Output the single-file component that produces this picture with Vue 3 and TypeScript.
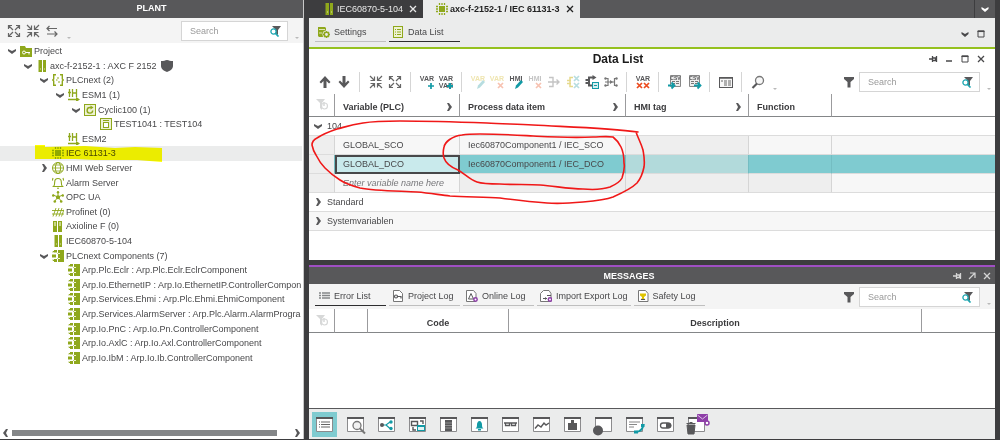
<script setup lang="ts">
import { ref } from 'vue'

interface TreeNode {
  label: string
  level: number
  icon: string
  chevron?: 'down' | 'right'
  shield?: boolean
  marked?: boolean
}

const tree: TreeNode[] = [
  { label: 'Project', level: 0, icon: 'folder', chevron: 'down' },
  { label: 'axc-f-2152-1 : AXC F 2152', level: 1, icon: 'device', chevron: 'down', shield: true },
  { label: 'PLCnext (2)', level: 2, icon: 'braces', chevron: 'down' },
  { label: 'ESM1 (1)', level: 3, icon: 'esm', chevron: 'down' },
  { label: 'Cyclic100 (1)', level: 4, icon: 'cyclic', chevron: 'down' },
  { label: 'TEST1041 : TEST104', level: 5, icon: 'program' },
  { label: 'ESM2', level: 3, icon: 'esm' },
  { label: 'IEC 61131-3', level: 2, icon: 'chip', marked: true },
  { label: 'HMI Web Server', level: 2, icon: 'globe', chevron: 'right' },
  { label: 'Alarm Server', level: 2, icon: 'bell' },
  { label: 'OPC UA', level: 2, icon: 'hub' },
  { label: 'Profinet (0)', level: 2, icon: 'profinet' },
  { label: 'Axioline F (0)', level: 2, icon: 'axio' },
  { label: 'IEC60870-5-104', level: 2, icon: 'device' },
  { label: 'PLCnext Components (7)', level: 2, icon: 'component', chevron: 'down' },
  { label: 'Arp.Plc.Eclr : Arp.Plc.Eclr.EclrComponent', level: 3, icon: 'component' },
  { label: 'Arp.Io.EthernetIP : Arp.Io.EthernetIP.ControllerCompon', level: 3, icon: 'component' },
  { label: 'Arp.Services.Ehmi : Arp.Plc.Ehmi.EhmiComponent', level: 3, icon: 'component' },
  { label: 'Arp.Services.AlarmServer : Arp.Plc.Alarm.AlarmProgra', level: 3, icon: 'component' },
  { label: 'Arp.Io.PnC : Arp.Io.Pn.ControllerComponent', level: 3, icon: 'component' },
  { label: 'Arp.Io.AxlC : Arp.Io.Axl.ControllerComponent', level: 3, icon: 'component' },
  { label: 'Arp.Io.IbM : Arp.Io.Ib.ControllerComponent', level: 3, icon: 'component' },
]

const G = '#8fa81c'
const D = '#58585a'
const T = '#129aa5'

// 12 x 12 glyphs
const small: Record<string, string> = {
  down: `<path d="M2 4l4 2 4-2v2L6 9 2 6z" fill="${D}"/>`,
  right: `<path d="M4 2l2 4-2 4h2l3-4-3-4z" fill="${D}"/>`,
  left: `<path d="M8 2L6 6l2 4H6L3 6l3-4z" fill="${D}"/>`,
  folder: `<path d="M0 1h5l1 2h6v9H0z" fill="${G}"/><circle cx="4" cy="7.500" r="1.500" fill="none" stroke="#fff"/><path d="M5.500 7.500H10M9 7.500v2" stroke="#fff" fill="none"/>`,
  device: `<path d="M2.500 0H6v12H2.500zM7 0h3v12H7z" fill="${G}"/><path d="M4 9h1M8 9h1" stroke="#d9e2a6"/>`,
  braces: `<path d="M4 .7H1.700V5L.7 6l1 1v4.300H4M8 .7h2.300V5l1 1-1 1v4.300H8" fill="none" stroke="${G}" stroke-width="1.400"/><path d="M5 4h2M4 6h1.500M6 8h2" stroke="${G}"/>`,
  esm: `<path d="M1.500 0v8M0 3.500h3M4.500 0v8M4.500 4h4M8.500 0v8M0 10.500h9" stroke="${G}" fill="none" stroke-width="1.300"/><path d="M8 8l4 2.500L8 13z" fill="${G}"/>`,
  cyclic: `<rect x=".5" y=".5" width="11" height="11" fill="#eef2d4" stroke="${G}"/><path d="M8.700 6.500A2.800 2.800 0 1 1 6 3.500h1" fill="none" stroke="${G}" stroke-width="1.400"/><path d="M6.500 1.500L9.500 3.500 6.500 5.500z" fill="${G}"/>`,
  program: `<rect x=".5" y=".5" width="11" height="11" fill="#eef2d4" stroke="${G}"/><rect x="3.500" y="4.500" width="5" height="5" fill="#fff" stroke="${G}"/><path d="M3 2.500h6" stroke="${G}"/>`,
  chip: `<rect x="3" y="3" width="6" height="6" fill="${G}"/><path d="M3.500 0v2M6 0v2M8.500 0v2M3.500 10v2M6 10v2M8.500 10v2M0 3.500h2M0 6h2M0 8.500h2M10 3.500h2M10 6h2M10 8.500h2" stroke="${G}" stroke-width="1.300"/>`,
  globe: `<g fill="none" stroke="${G}"><circle cx="6" cy="6" r="5.500"/><ellipse cx="6" cy="6" rx="2.600" ry="5.500"/><path d="M.5 6h11M1.500 3h9M1.500 9h9" stroke-width=".8"/></g>`,
  bell: `<path d="M1.500 9.500h9c-1.200-1-1.200-2-1.200-4.500S8 1.500 6 1.500 2.700 2.500 2.700 5s0 3.500-1.200 4.500zM5 11.200h2M1 1l-.7 2.500M11 1l.7 2.500" fill="none" stroke="${G}" stroke-width="1.100"/>`,
  hub: `<path d="M6 6V1M6 6L1 4M6 6l5-2M6 6l-3.500 4.500M6 6l3.500 4.500" stroke="${G}"/><g fill="${G}"><circle cx="6" cy="6.300" r="2"/><circle cx="6" cy="1.200" r="1.200"/><circle cx="1.200" cy="4.500" r="1.200"/><circle cx="10.800" cy="4.500" r="1.200"/><circle cx="2.800" cy="10.500" r="1.300"/><circle cx="9.200" cy="10.500" r="1.300"/></g>`,
  profinet: `<path d="M0 4.500h12M0 8h12M1 10.500L4 2M4 10.500L7 2M7 10.500L10 2M9.500 10.500L12 3.500" stroke="${G}" stroke-width=".9"/>`,
  axio: `<path d="M1 1h4v11H1zM6 1h4v11H6z" fill="${G}"/><path d="M3 2v4M8 2v4" stroke="#dbe3ae" stroke-width="1.500"/>`,
  component: `<path d="M6 0h6v12H6zM2 0h3v2.500H2zM0 4.500h4v3H0zM2 9h3v3H2z" fill="${G}"/><path d="M1 2.500v-1h1M5 3.500h3M5 8.500h3M1 9.500v1h1" fill="none" stroke="${G}"/><path d="M5.500 3.500H8M5.500 8.500H8" stroke="#eef2d4"/>`,
  shield: `<path d="M0 1c3 0 4-.5 6-1 2 .5 3 1 6 1v5c0 3-3 5-6 6-3-1-6-3-6-6z" fill="${D}"/>`,
  settings: `<path d="M0 1h7l1 1v9H1L0 10z" fill="${G}"/><path d="M1 3.500h6M1 7h3" stroke="#dfe7b5"/><circle cx="8.500" cy="8.500" r="4" fill="#ebecec"/><circle cx="8.500" cy="8.500" r="2.200" fill="none" stroke="${G}" stroke-width="1.500"/><path d="M8.500 5v1M8.500 11v1M5 8.500h1M11 8.500h1M6 6l.7.700M11 6l-.7.700M6 11l.7-.7M11 11l-.7-.7" stroke="${G}" stroke-width="1.300"/>`,
  list: `<rect x="1.500" y=".5" width="9" height="11" fill="#eef2d4" stroke="${G}"/><path d="M3 3.500h1M5 3.500h4M3 6h1M5 6h4M3 8.500h1M5 8.500h4" stroke="${G}"/>`,
  errors: `<path d="M1 3h2M4 3h8M1 5.500h2M4 5.500h8M1 8h2M4 8h8" stroke="#848688" stroke-width="1.300"/>`,
  project: `<path d="M1.500.5h6l3 3v8h-9z" fill="#fff" stroke="#777"/><circle cx="4" cy="6.500" r="1.500" fill="none" stroke="${D}" stroke-width="1.200"/><path d="M5.500 6.500H9v2" fill="none" stroke="${D}" stroke-width="1.200"/>`,
  online: `<path d="M.5.5h7l2.500 3v8H.5z" fill="#fff" stroke="#777"/><path d="M2.500 9L5 3.500 7.500 9z" fill="none" stroke="${D}"/><circle cx="9.500" cy="9.500" r="1.700" fill="#fff" stroke="#8e3fa8" stroke-width="1.500"/>`,
  impexp: `<path d="M.5 11.500v-8l3-3H9l2 3v8z" fill="#fff" stroke="#777"/><path d="M3 8.500h4M7 5.500h4" stroke="${D}"/><path d="M5 7l2 1.500L5 10z" fill="${D}"/><circle cx="10" cy="9.500" r="1.700" fill="#fff" stroke="#8e3fa8" stroke-width="1.500"/>`,
  safety: `<path d="M1.500.5h7l2.500 3v8H1.500z" fill="#fff" stroke="#777"/><path d="M3 3.500h6v2L7 7v1l1.500 2h-5L5 8V7L3 5.500z" fill="#e0c400"/><path d="M4 9.500h4" stroke="${D}"/>`,
  pin: `<path d="M2 6h3M5.500 3v6M6 5h2.500v2.500H6M9.500 3v6" stroke="currentColor" stroke-width="1.300" fill="none"/>`,
  min: `<path d="M3 8h6" stroke="currentColor" stroke-width="1.500"/>`,
  max: `<path d="M3 3v6h6V3z" fill="none" stroke="currentColor"/><path d="M2.500 3.300h7" stroke="currentColor" stroke-width="1.500"/>`,
  close: `<path d="M3 3l6 6M9 3L3 9" stroke="currentColor" stroke-width="1.300"/>`,
  popout: `<path d="M3 9l5.500-5.500M4 3h5v5" fill="none" stroke="currentColor" stroke-width="1.200"/>`,
  chev: `<path d="M2.500 4L6 6l3.500-2v2L6 9 2.500 6z" fill="currentColor"/>`,
  more: `<path d="M4 6h4l-2 2z" fill="#b9b9b9"/>`,
  find: `<path d="M3 1h9L9 5v5L6 8V4z" fill="${D}"/><circle cx="4.500" cy="6.500" r="2.600" fill="#fff" stroke="#1fa7b1" stroke-width="1.300"/><path d="M6.500 8.500l3 3" stroke="#1fa7b1" stroke-width="1.700"/>`,
  funnel: `<path d="M1 1h10v2L7.500 6v5.500h-3V6L1 3z" fill="${D}"/>`,
  filterReset: `<path d="M0 0h9L6 4v7L4 9V4z" fill="#d7d8d8"/><circle cx="8.500" cy="7" r="3" fill="#fff" stroke="#d7d8d8" stroke-width="1.200"/><path d="M8 3v4" stroke="#d7d8d8" stroke-width="1.500"/>`,
}

const word = (t: string, c: string, y = 7): string =>
  `<text x="8" y="${y}" text-anchor="middle" font-family="Liberation Sans, sans-serif" font-weight="bold" font-size="7" fill="${c}">${t}</text>`
const cross = (x: number, y: number, c: string): string =>
  `<path d="M${x} ${y}l5 5M${x + 5} ${y}l-5 5" stroke="${c}" stroke-width="1.700"/>`
const pencil = (c: string): string => `<path d="M7 15l1-3.500 5-5.500 2 2-5 5.500z" fill="${c}"/>`
const sheet = `<path d="M3.500 1.500h10v11h-10z" fill="#eee" stroke="#888"/>` +
  `<text x="8.500" y="6" text-anchor="middle" font-family="Liberation Sans, sans-serif" font-weight="bold" font-size="5" fill="${D}">CSV</text>` +
  `<path d="M5 7.500h3M9 7.500h3M9 9.500h3M5 9.500h3" stroke="#777"/>`

// 16 x 16 glyphs
const tool: Record<string, string> = {
  up: `<path d="M8 2l5.500 6-1.500 1.500L9.500 7v7h-3V7L4 9.500 2.500 8z" fill="${D}"/>`,
  dn: `<path d="M8 14l5.500-6L12 6.500 9.500 9V2h-3v7L4 6.500 2.500 8z" fill="${D}"/>`,
  collapse: `<path d="M2 2l4 4M14 2l-4 4M2 14l4-4M14 14l-4-4M6.500 2.500v4h-4M9.500 2.500v4h4M6.500 13.500v-4h-4M9.500 13.500v-4h4" fill="none" stroke="#666" stroke-width="1.200"/>`,
  expand: `<path d="M7 7L2.500 2.500M9 7l4.500-4.500M7 9l-4.500 4.500M9 9l4.500 4.500M2.500 6V2.500H6M10 2.500h3.500V6M2.500 10v3.500H6M10 13.500h3.500V10" fill="none" stroke="#666" stroke-width="1.200"/>`,
  swap: `<path d="M13 5.500H3M3 11h10M5.500 3L3 5.500 5.500 8M10.500 8.500L13 11l-2.500 2.500" fill="none" stroke="#666" stroke-width="1.200"/>`,
  varAdd: word('VAR', D) + `<path d="M12 9v6M9 12h6" stroke="${T}" stroke-width="1.700"/>`,
  varsAdd: word('VAR', D) + word('VAR', D, 14) + `<path d="M12 9v6M9 12h6" stroke="${T}" stroke-width="2"/>`,
  varEdit: word('VAR', '#efe5b0') + pencil('#b7dde0'),
  varDel: word('VAR', '#efe5b0') + cross(9, 9, '#f7c2b1'),
  hmiEdit: word('HMI', D) + pencil(T),
  hmiDel: word('HMI', '#c4c4c4') + cross(9, 9, '#f7c2b1'),
  merge: `<path d="M3 3.500h4v9H3M2 8h11M10.500 5.500L13 8l-2.500 2.500" fill="none" stroke="#c4c4c4" stroke-width="1.400"/>`,
  split: `<path d="M8 3.500H5v9h3M2 6.500h4M2 9.500h4" fill="none" stroke="#e6d98c" stroke-width="1.500"/>` + cross(9, 2, '#b7dde0') + cross(9, 9, '#b7dde0'),
  connect: `<path d="M9 3.500H5v8h3M1.500 6H5M1.500 9H5" fill="none" stroke="${D}" stroke-width="2"/><path d="M8.500 1l4 2.500-4 2.500z" fill="${D}"/><rect x="8.500" y="8.500" width="6" height="6" fill="#d6eff0" stroke="${T}"/><path d="M10 11.500h3" stroke="${T}"/>`,
  link: `<path d="M2 4.500h3v7H2M14 4.500h-2.500v7H14M2 8h10" fill="none" stroke="#777" stroke-width="1.200"/><path d="M7 6l3 2-3 2z" fill="#777"/><circle cx="2.500" cy="4.500" r="1.200" fill="#777"/><circle cx="2.500" cy="11.500" r="1.200" fill="#777"/><circle cx="13.500" cy="4.500" r="1.200" fill="#777"/><circle cx="13.500" cy="11.500" r="1.200" fill="#777"/>`,
  varClear: word('VAR', D) + cross(2, 9, '#ec4b1e') + cross(9, 9, '#ec4b1e'),
  csvIn: sheet + `<path d="M1 11.500h5M4.500 8.500l3 3-3 3" fill="none" stroke="${T}" stroke-width="1.800"/>`,
  csvOut: sheet + `<path d="M8 11.500h6M11.500 8.500l3 3-3 3" fill="none" stroke="${T}" stroke-width="1.800"/>`,
  table: `<rect x="1.500" y="3.500" width="13" height="10" fill="#f7f7f7" stroke="${D}"/><path d="M1 4h14" stroke="${D}" stroke-width="1.500"/><path d="M3 7h2M6 7h3M10 7h3M6 9h3M10 9h3M6 11h3M10 11h3" stroke="#666"/>`,
  lens: `<circle cx="9.500" cy="6.500" r="4" fill="#f7f7f7" stroke="#777" stroke-width="1.300"/><path d="M7 9.500l-4.500 4.500" stroke="${D}" stroke-width="2.200"/>`,
}

const frame = `<path d="M4.500 6h16v13.500h-16z" fill="#fff" stroke="#8b8b8d"/><path d="M4 6h17" stroke="${D}" stroke-width="2"/>`
// 25 x 25 glyphs of the view bar
const views: { name: string; art: string }[] = [
  { name: 'Messages', art: `<path d="M7 10h1M9 10h9M7 12.500h1M9 12.500h9M7 15h1M9 15h9" stroke="#666" stroke-width="1.200"/>` },
  { name: 'Find', art: `<circle cx="14" cy="13.500" r="4" fill="#f1f1f1" stroke="#777" stroke-width="1.300"/><path d="M17 16.500l5 5" stroke="#777" stroke-width="2"/>` },
  { name: 'Cross references', art: `<path d="M8 13h4l4-3M12 13l4 3.500" stroke="${T}" fill="none" stroke-width="1.200"/><circle cx="8" cy="13" r="2" fill="${D}"/><circle cx="17" cy="10" r="1.700" fill="${T}"/><circle cx="17" cy="16.500" r="1.700" fill="${T}"/>` },
  { name: 'Call tree', art: `<path d="M6.500 9.500h6v4h-6zM8 15v3h3M15 9h3v3" fill="none" stroke="${D}" stroke-width="1.400"/><rect x="12.500" y="13.500" width="7" height="5" fill="#e2f4f5" stroke="${T}"/><path d="M12 14h8" stroke="${T}" stroke-width="2"/>` },
  { name: 'Stack', art: `<path d="M9 8h7v11H9z" fill="${D}"/><path d="M9 11h7M9 13.500h7M9 16h7" stroke="#aaa" stroke-width=".7"/>` },
  { name: 'Alarms', art: `<path d="M8.500 16.500c1.500-1 1.500-2.500 1.500-4s1-3.500 2.500-3.500 2.500 2 2.500 3.500 0 3 1.500 4zM11 17h3v1.500h-3z" fill="${T}"/>` },
  { name: 'Watch', art: `<path d="M6 11h13M7.500 11v2.500h4V11M13.500 11v2.500h4V11" fill="none" stroke="${D}" stroke-width="1.300"/>` },
  { name: 'Logic analyzer', art: `<path d="M6 16.500l3-3.500 3 2 3-4 2 2 3-2" fill="none" stroke="${D}" stroke-width="1.400"/>` },
  { name: 'Breakpoints', art: `<path d="M11 8h3v3h3v7H8v-7h3z" fill="${D}"/>` },
  { name: 'Recording', art: `<circle cx="7" cy="18.500" r="5" fill="${D}"/>` },
  { name: 'Online calls', art: `<path d="M7 10h11M7 12.500h8M7 15h5" stroke="#888" stroke-width="1.200"/><path d="M13 20c5 0 8-3 8.500-8" stroke="${T}" stroke-width="2" fill="none"/><path d="M12 18.500h4v3h-4zM19 12h3.500v3H19z" fill="${T}"/>` },
  { name: 'Forcing', art: `<rect x="7.500" y="11" width="10" height="5" rx="2.500" fill="#fff" stroke="${D}" stroke-width="1.300"/><path d="M13 11h3a2.500 2.500 0 0 1 0 5h-3z" fill="${D}"/>` },
  { name: 'Recycle bin', art: `<path d="M3 13h8l-1 9H4zM2.500 11.500h9M5.500 10.500h3" fill="${D}" stroke="${D}"/><path d="M13 2h11v8H13z" fill="#8e3fa8"/><path d="M13.500 3l5 4 5-4" fill="none" stroke="#dcc3e6"/><circle cx="23" cy="11" r="2" fill="#fff" stroke="#8e3fa8" stroke-width="1.500"/>` },
]

const toolGroups: string[][] = [
  ['up', 'dn'],
  ['collapse', 'expand'],
  ['varAdd', 'varsAdd'],
  ['varEdit', 'varDel', 'hmiEdit', 'hmiDel', 'merge', 'split', 'connect', 'link'],
  ['varClear'],
  ['csvIn', 'csvOut'],
  ['table'],
  ['lens'],
]

const logTabs = [
  { label: 'Error List', icon: 'errors' },
  { label: 'Project Log', icon: 'project' },
  { label: 'Online Log', icon: 'online' },
  { label: 'Import Export Log', icon: 'impexp' },
  { label: 'Safety Log', icon: 'safety' },
]

const activeLog = ref(0)
const activeView = ref(0)
const plantQuery = ref('')
const dataQuery = ref('')
const messageQuery = ref('')
</script>

<template>
  <div class="app">
    <aside class="plant">
      <h2 class="bar-title">PLANT</h2>
      <div class="plant-tools">
        <button v-for="n in ['expand', 'collapse', 'swap']" :key="n" type="button" :aria-label="n">
          <svg class="i16" viewBox="0 0 16 16" v-html="tool[n]" />
        </button>
        <svg class="i12 low" viewBox="0 0 12 12" v-html="small.more" />
        <label class="search">
          <input v-model="plantQuery" type="text" placeholder="Search" aria-label="Search plant" />
          <svg class="i12" viewBox="0 0 12 12" v-html="small.find" />
        </label>
        <svg class="i12 low" viewBox="0 0 12 12" v-html="small.more" />
      </div>
      <ul class="tree">
        <li v-for="(n, i) in tree" :key="i" :class="['node', 'level-' + n.level, { marked: n.marked }]">
          <svg class="i12" viewBox="0 0 12 12" v-html="n.chevron ? small[n.chevron] : ''" />
          <svg class="i12" viewBox="0 0 12 12" v-html="small[n.icon]" />
          <span>{{ n.label }}</span>
          <svg v-if="n.shield" class="i12 shield" viewBox="0 0 12 12" v-html="small.shield" />
          <svg v-if="n.marked" class="marker" viewBox="0 0 127 18">
            <path d="M0 1h10v2l40-1 30 2 20-1 27 1v14l-25-2H60l-20-1H0z" fill="#ff0" />
          </svg>
        </li>
      </ul>
      <div class="hscroll">
        <button type="button" aria-label="Scroll left"><svg class="i12" viewBox="0 0 12 12" v-html="small.left" /></button>
        <div class="track"><div class="thumb"></div></div>
        <button type="button" aria-label="Scroll right"><svg class="i12" viewBox="0 0 12 12" v-html="small.right" /></button>
      </div>
    </aside>

    <main class="work">
      <section class="editor">
        <nav class="doc-tabs">
          <div class="doc-tab">
            <svg class="i12" viewBox="0 0 12 12" v-html="small.device" />
            <button type="button">IEC60870-5-104</button>
            <button type="button" aria-label="Close IEC60870-5-104"><svg class="i12" viewBox="0 0 12 12" v-html="small.close" /></button>
          </div>
          <div class="doc-tab current">
            <svg class="i12" viewBox="0 0 12 12" v-html="small.chip" />
            <button type="button">axc-f-2152-1 / IEC 61131-3</button>
            <button type="button" aria-label="Close IEC 61131-3"><svg class="i12" viewBox="0 0 12 12" v-html="small.close" /></button>
          </div>
          <button class="tab-menu" type="button" aria-label="Open tabs"><svg class="i12" viewBox="0 0 12 12" v-html="small.chev" /></button>
        </nav>

        <div class="sub-bar">
          <button class="line-tab" type="button"><svg class="i12" viewBox="0 0 12 12" v-html="small.settings" />Settings</button>
          <button class="line-tab on" type="button"><svg class="i12" viewBox="0 0 12 12" v-html="small.list" />Data List</button>
          <div class="win-buttons">
            <button v-for="n in ['chev', 'max']" :key="n" type="button" :aria-label="n"><svg class="i12" viewBox="0 0 12 12" v-html="small[n]" /></button>
          </div>
        </div>

        <div class="data">
          <header class="data-head">
            <h1>Data List</h1>
            <div class="win-buttons">
              <button v-for="n in ['pin', 'min', 'max', 'close']" :key="n" type="button" :aria-label="n"><svg class="i12" viewBox="0 0 12 12" v-html="small[n]" /></button>
            </div>
          </header>
          <div class="tools">
            <template v-for="(g, gi) in toolGroups" :key="gi">
              <span v-if="gi" class="sep"></span>
              <button v-for="n in g" :key="n" type="button" :aria-label="n"><svg class="i16" viewBox="0 0 16 16" v-html="tool[n]" /></button>
            </template>
            <svg class="i12 low" viewBox="0 0 12 12" v-html="small.more" />
            <div class="right-tools">
              <button type="button" aria-label="Filter"><svg class="i12" viewBox="0 0 12 12" v-html="small.funnel" /></button>
              <label class="search wide">
                <input v-model="dataQuery" type="text" placeholder="Search" aria-label="Search data list" />
                <svg class="i12" viewBox="0 0 12 12" v-html="small.find" />
              </label>
              <svg class="i12 low" viewBox="0 0 12 12" v-html="small.more" />
            </div>
          </div>

          <table class="grid">
            <colgroup><col class="c-mark" /><col class="c-var" /><col class="c-item" /><col class="c-tag" /><col class="c-func" /><col /></colgroup>
            <thead>
              <tr>
                <th><svg class="i12" viewBox="0 0 12 12" v-html="small.filterReset" /></th>
                <th v-for="h in ['Variable (PLC)', 'Process data item', 'HMI tag']" :key="h">
                  <div class="head-cell">{{ h }}<svg class="i12" viewBox="0 0 12 12" v-html="small.right" /></div>
                </th>
                <th>Function</th>
                <th></th>
              </tr>
            </thead>
            <tbody>
              <tr class="group"><td colspan="6"><svg class="i12" viewBox="0 0 12 12" v-html="small.down" />104</td></tr>
              <tr>
                <td class="dim"></td><td>GLOBAL_SCO</td><td>Iec60870Component1 / IEC_SCO</td><td class="dim"></td><td></td><td></td>
              </tr>
              <tr class="selected">
                <td class="dim"></td><td class="focus">GLOBAL_DCO</td><td>Iec60870Component1 / IEC_DCO</td><td class="soft"></td><td></td><td></td>
              </tr>
              <tr>
                <td class="dim"></td><td class="hint">Enter variable name here</td><td class="dim"></td><td class="dim"></td><td class="dim"></td><td></td>
              </tr>
              <tr class="group"><td colspan="6"><svg class="i12" viewBox="0 0 12 12" v-html="small.right" />Standard</td></tr>
              <tr class="group alt"><td colspan="6"><svg class="i12" viewBox="0 0 12 12" v-html="small.right" />Systemvariablen</td></tr>
            </tbody>
          </table>

          <svg class="ink" viewBox="309 118 340 90" fill="none" stroke="#f01818" stroke-width="1.600" stroke-linejoin="round" stroke-linecap="round">
            <path d="M638 132C610 128 570 127 533 125C515 124 500 124 487 123C460 122 425 121 400 121C385 121 375 121 363 123C350 125 345 127 337 129C328 132 320 136 317 138C313 140 312 142 312 145C313 150 314 152 316 155C319 161 321 164 325 168C330 173 335 177 340 180C346 184 353 186 360 188C375 191 400 191 417 192C430 193 440 195 450 196C465 197 485 197 500 198C515 200 532 202 547 203C560 204 572 203 583 202C594 201 605 200 613 197C622 193 632 188 637 183C642 177 643 172 644 167C645 160 644 156 643 150C641 143 638 138 636 132" />
            <path d="M462 135C452 136 445 142 444 147C443 151 443 155 444 158C446 164 453 168 458 170C465 174 470 180 477 182C483 184 490 184 500 184C515 185 528 184 540 185C555 186 568 189 583 189C594 190 604 189 610 187C617 184 620 182 622 178C624 172 625 168 624 163C624 156 623 151 621 147C619 143 617 140 613 137C606 136 600 137 593 137C570 138 553 137 533 136C515 135 500 134 480 134C473 134 468 134 462 135" />
          </svg>
        </div>
      </section>

      <section class="messages">
        <header class="bar-title msg-title">
          <h2>MESSAGES</h2>
          <div class="win-buttons">
            <button v-for="n in ['pin', 'popout', 'close']" :key="n" type="button" :aria-label="n"><svg class="i12" viewBox="0 0 12 12" v-html="small[n]" /></button>
          </div>
        </header>
        <div class="log-bar">
          <button v-for="(t, i) in logTabs" :key="t.label" type="button" :class="['line-tab', { on: activeLog === i }]" @click="activeLog = i">
            <svg class="i12" viewBox="0 0 12 12" v-html="small[t.icon]" />{{ t.label }}
          </button>
          <div class="right-tools">
            <button type="button" aria-label="Filter"><svg class="i12" viewBox="0 0 12 12" v-html="small.funnel" /></button>
            <label class="search wide">
              <input v-model="messageQuery" type="text" placeholder="Search" aria-label="Search messages" />
              <svg class="i12" viewBox="0 0 12 12" v-html="small.find" />
            </label>
            <svg class="i12 low" viewBox="0 0 12 12" v-html="small.more" />
          </div>
        </div>
        <div class="msg-body">
          <table class="grid msg-grid">
            <colgroup><col class="c-mark" /><col class="c-kind" /><col class="c-code" /><col /><col class="c-end" /></colgroup>
            <thead>
              <tr>
                <th><svg class="i12" viewBox="0 0 12 12" v-html="small.filterReset" /></th>
                <th></th><th>Code</th><th>Description</th><th></th>
              </tr>
            </thead>
          </table>
        </div>
        <nav class="views">
          <button v-for="(v, i) in views" :key="v.name" type="button" :aria-label="v.name" :class="{ on: activeView === i }" @click="activeView = i">
            <svg class="i25" viewBox="0 0 25 25" v-html="frame + v.art" />
          </button>
        </nav>
      </section>
    </main>
  </div>
</template>

<style>
body {
  margin: 0;
  background: #3d3d3f;
}
</style>

<style scoped>
.app {
  display: grid;
  grid-template-columns: 304px minmax(0, 1fr);
  column-gap: 5px;
  box-sizing: border-box;
  min-height: 100vh;
  padding: 0 5px 1px 0;
  background: #3d3d3f;
  color: #48484a;
  font: 9px/12px 'Liberation Sans', Arial, sans-serif;
}
button {
  display: inline-flex;
  align-items: center;
  padding: 0;
  border: 0;
  background: none;
  color: inherit;
  font: inherit;
  white-space: nowrap;
  cursor: pointer;
}
svg { display: block; flex: none; }
.i12 { width: 12px; height: 12px; }
.i16 { width: 16px; height: 16px; }
.i25 { width: 25px; height: 25px; overflow: visible; }
.low { align-self: flex-end; }

.plant {
  display: flex;
  flex-direction: column;
  min-width: 0;
  background: #fff;
  border-right: 1px solid #c8c8c8;
  box-sizing: border-box;
}
.bar-title {
  margin: 0;
  background: #58585a;
  color: #fff;
  font-size: 9px;
  font-weight: bold;
  line-height: 16px;
  height: 18px;
  text-align: center;
}
.plant-tools {
  display: flex;
  align-items: center;
  gap: 3px;
  height: 25px;
  padding-left: 6px;
  background: #f4f4f4;
}
.search {
  display: flex;
  align-items: center;
  box-sizing: border-box;
  width: 107px;
  height: 20px;
  margin-left: auto;
  padding: 0 6px 0 8px;
  border: 1px solid #d5d5d5;
  background: #fff;
}
.search.wide { width: 121px; }
.search input {
  flex: 1;
  min-width: 0;
  padding: 0;
  border: 0;
  outline: 0;
  background: none;
  color: #48484a;
  font: inherit;
}
.search input::placeholder { color: #9a9a9a; opacity: 1; }

.tree {
  display: grid;
  grid-auto-rows: 1fr;
  min-height: 321px;
  margin: 1px 1px 0 0;
  padding: 0;
  list-style: none;
}
.node {
  position: relative;
  display: flex;
  align-items: center;
  gap: 2px;
  min-width: 0;
  white-space: nowrap;
}
.level-0 { padding-left: 6px; }
.level-1 { padding-left: 22px; }
.level-2 { padding-left: 38px; }
.level-3 { padding-left: 54px; }
.level-4 { padding-left: 70px; }
.level-5 { padding-left: 86px; }
.shield { margin-left: 2px; }
.marked { background: #ebecec; }
.marker {
  position: absolute;
  left: 35px;
  top: -2px;
  width: 127px;
  height: 18px;
  mix-blend-mode: multiply;
}
.hscroll {
  display: flex;
  align-items: center;
  height: 12px;
  margin-top: auto;
}
.track { flex: 1; }
.thumb { width: 95%; height: 6px; background: #848688; }

.work {
  display: flex;
  flex-direction: column;
  gap: 5px;
  min-width: 0;
}
.editor {
  display: flex;
  flex-direction: column;
  flex: 1;
}
.doc-tabs {
  display: flex;
  height: 18px;
  background: #58585a;
}
.doc-tab {
  display: flex;
  align-items: center;
  gap: 2px;
  padding: 0 4px 0 14px;
  background: #3d3d3f;
  color: #e8e8e8;
}
.doc-tab button + button { margin-left: 2px; }
.doc-tab.current {
  padding-left: 13px;
  background: #ebecec;
  color: #222;
  font-weight: bold;
}
.tab-menu {
  margin-left: auto;
  padding: 0 4px;
  border-left: 1px solid #3d3d3f;
  color: #fff;
}
.sub-bar {
  display: flex;
  align-items: flex-end;
  gap: 3px;
  box-sizing: border-box;
  height: 31px;
  padding: 0 8px 5px 6px;
  border-bottom: 2px solid #95c11f;
  background: #ebecec;
}
.line-tab {
  gap: 4px;
  box-sizing: border-box;
  min-width: 71px;
  height: 19px;
  padding: 0 3px;
  border-bottom: 1px solid #bfbfbf;
}
.line-tab.on { border-bottom-color: #2d2d2f; }
.win-buttons {
  display: flex;
  gap: 4px;
  margin-left: auto;
  color: #48484a;
}
.sub-bar .win-buttons { padding-bottom: 2px; }

.data {
  position: relative;
  flex: 1;
  background: #fff;
}
.data-head {
  display: flex;
  align-items: center;
  height: 20px;
  padding-right: 8px;
}
.data-head h1 {
  flex: 1;
  margin: 0;
  color: #1c1c1c;
  font-size: 12px;
  line-height: 18px;
  text-align: center;
}
.tools {
  display: flex;
  align-items: center;
  gap: 3px;
  height: 25px;
  padding-left: 8px;
}
.sep {
  width: 1px;
  height: 20px;
  margin: 0 5px 0 4px;
  background: #d5d5d5;
}
.right-tools {
  display: flex;
  align-items: center;
  align-self: stretch;
  gap: 3px;
  margin-left: auto;
}
.right-tools .search { margin-left: 1px; }

.grid {
  width: 100%;
  table-layout: fixed;
  border-spacing: 0;
  border-collapse: separate;
}
.c-mark { width: 26px; }
.c-var { width: 125px; }
.c-item { width: 166px; }
.c-tag { width: 123px; }
.c-func { width: 83px; }
.c-kind { width: 33px; }
.c-code { width: 141px; }
.c-end { width: 73px; }
.grid th {
  box-sizing: border-box;
  height: 23px;
  padding: 4px 8px 0;
  border-right: 1px solid #9b9b9d;
  border-bottom: 1px solid #848688;
  color: #3a3a3c;
  text-align: left;
}
.grid th:first-child { padding: 0 0 0 7px; }
.grid th:last-child { border-right: 0; }
.head-cell {
  display: flex;
  align-items: center;
  justify-content: space-between;
  margin-right: -4px;
}
.grid td {
  box-sizing: border-box;
  height: 19px;
  padding: 0 8px;
  border-right: 1px solid #d5d5d5;
  border-bottom: 1px solid #dcdcdc;
  background: #f7f7f7;
  white-space: nowrap;
}
.grid td:last-child { border-right: 0; }
.grid td.dim { background: #eee; }
.grid .selected td { background: #7fcbd0; border-right-color: #74bdc2; }
.grid .selected td.dim { background: #eee; }
.grid .selected td.soft { background: #b2dadb; }
.grid .selected td.focus {
  background: #c9eaec;
  outline: 2px solid #48484a;
  outline-offset: -2px;
}
.grid td.hint { color: #77777a; font-style: italic; }
.grid .group td { padding-left: 3px; background: #fff; }
.grid .group.alt td { background: #f7f7f7; }
.group svg { display: inline-block; margin-right: 3px; vertical-align: middle; }
.ink {
  position: absolute;
  left: 0;
  top: 69px;
  width: 340px;
  height: 90px;
  pointer-events: none;
}

.msg-title {
  display: grid;
  grid-template-columns: 1fr auto 1fr;
  align-items: center;
  box-sizing: border-box;
  height: 19px;
  padding-right: 2px;
  border-top: 2px solid #a04fc4;
}
.msg-title h2 {
  grid-column: 2;
  margin: 0;
  padding-right: 44px;
  font-size: 9px;
}
.msg-title .win-buttons { gap: 3px; color: #d5d5d5; }
.log-bar {
  display: flex;
  align-items: center;
  gap: 3px;
  height: 25px;
  padding-left: 6px;
  background: #f4f4f4;
}
.msg-body {
  min-height: 99px;
  background: #fff;
}
.msg-grid th { height: 24px; text-align: center; }
.views {
  display: flex;
  gap: 6px;
  padding: 3px 3px 2px;
  border-top: 1px solid #58585a;
  background: #ebecec;
}
.views .on { background: #7fcbd0; }
</style>
